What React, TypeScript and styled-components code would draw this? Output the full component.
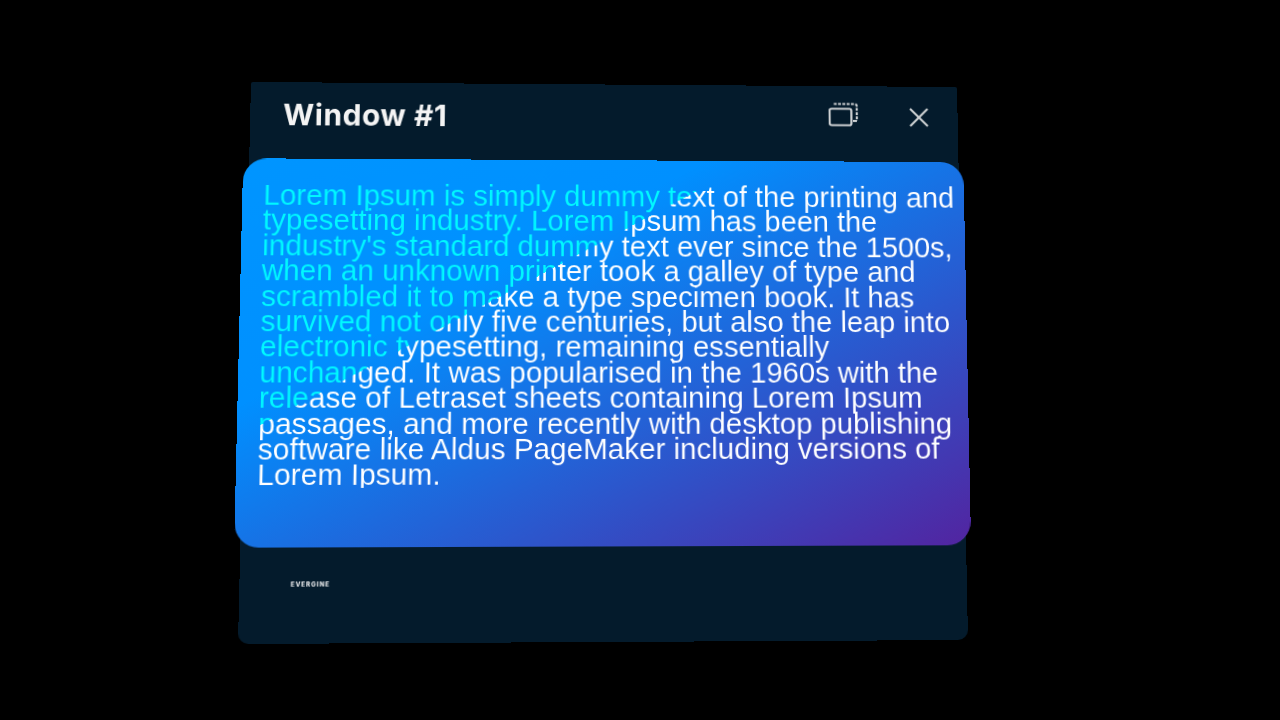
import React from "react";
import styled, { createGlobalStyle } from "styled-components";

const WIDTH = 720;
const HEIGHT = 558;

// Perspective of the floating window: flat corners -> photographed corners (relative to its flow position).
function quadMatrix(q: number[][], w: number, h: number): string {
  const [[x0, y0], [x1, y1], [x2, y2], [x3, y3]] = q;
  const sx = x0 - x1 + x2 - x3;
  const sy = y0 - y1 + y2 - y3;
  const dx1 = x1 - x2;
  const dx2 = x3 - x2;
  const dy1 = y1 - y2;
  const dy2 = y3 - y2;
  const den = dx1 * dy2 - dx2 * dy1;
  const g = (sx * dy2 - dx2 * sy) / den;
  const k = (dx1 * sy - sx * dy1) / den;
  const a = x1 - x0 + g * x1;
  const b = x3 - x0 + k * x3;
  const d = y1 - y0 + g * y1;
  const e = y3 - y0 + k * y3;
  return `matrix3d(${a / w},${d / w},0,${g / w},${b / h},${e / h},0,${k / h},0,0,1,0,${x0},${y0},0,1)`;
}

const windowTransform = quadMatrix(
  [
    [11, 0],
    [717, 5],
    [728, 558],
    [-2, 562],
  ],
  WIDTH,
  HEIGHT,
);

const GlobalStyle = createGlobalStyle`
  html, body {
    margin: 0;
    height: 100%;
    background: #000;
  }
  #root {
    height: 100%;
  }
`;

const Scene = styled.main`
  box-sizing: border-box;
  width: 100%;
  height: 720px;
  padding: 82px 0 0 240px;
  background: #000;
  overflow: hidden;
`;

const Window = styled.section`
  display: flex;
  flex-direction: column;
  width: ${WIDTH}px;
  height: ${HEIGHT}px;
  background: #041b2c;
  border-radius: 2px 2px 10px 10px;
  transform-origin: 0 0;
  transform: ${windowTransform};
`;

const TitleBar = styled.header`
  box-sizing: border-box;
  flex: 0 0 78px;
  display: flex;
  align-items: center;
  padding: 0 30px 20px 33px;
`;

const Title = styled.h1`
  flex: 1;
  margin: 0;
  padding-top: 8px;
  font-family: "Inter", "Noto Sans", sans-serif;
  font-size: 30px;
  font-weight: 700;
  letter-spacing: 0.6px;
  color: #f4f4f4;
`;

const IconButton = styled.button`
  display: flex;
  padding: 0;
  border: 0;
  background: none;
  color: #cfd2d4;
`;

const Controls = styled.div`
  display: flex;
  align-items: flex-end;
  gap: 52px;
`;

const Panel = styled.div`
  box-sizing: border-box;
  flex: 0 0 387px;
  margin: 0 -5px 0 -6px;
  padding: 24px 5px 0 21px;
  border-radius: 24px;
  background: linear-gradient(152deg, #0095ff 0%, #0090ff 32%, #5224a0 100%);
`;

const Body = styled.p`
  margin: 0;
  font-family: "Liberation Sans", Arial, sans-serif;
  font-size: 29.55px;
  line-height: 25.4px;
  color: transparent;
  background: linear-gradient(151.5deg, #00f8ff 0%, #00f8ff 35.5%, #ffffff 35.5%, #ffffff 100%);
  -webkit-background-clip: text;
  background-clip: text;
`;

const Footer = styled.footer`
  flex: 1;
  display: flex;
  align-items: center;
  padding: 0 0 22px 50px;
`;

const Brand = styled.span`
  font-family: "Inter", "Noto Sans", sans-serif;
  font-size: 6.2px;
  font-weight: 800;
  letter-spacing: 0.9px;
  color: #e4e6e8;
`;

const RestoreIcon = () => (
  <svg width="31" height="25" viewBox="0 0 31 25" fill="none" stroke="currentColor" strokeWidth="2.2">
    <rect x="1" y="6.5" width="22.4" height="17" rx="2" />
    <path d="M5.5 1.5H27a2 2 0 0 1 2 2V19" strokeDasharray="3 1.4" />
    <path d="M29 19h-4" />
  </svg>
);

const CloseIcon = () => (
  <svg width="20" height="20" viewBox="0 0 20 20" fill="none" stroke="currentColor" strokeWidth="2.2">
    <path d="M1 1l18 18M19 1L1 19" />
  </svg>
);

const LOREM =
  "Lorem Ipsum is simply dummy text of the printing and typesetting industry. Lorem Ipsum has been the industry's standard dummy text ever since the 1500s, when an unknown printer took a galley of type and scrambled it to make a type specimen book. It has survived not only five centuries, but also the leap into electronic typesetting, remaining essentially unchanged. It was popularised in the 1960s with the release of Letraset sheets containing Lorem Ipsum passages, and more recently with desktop publishing software like Aldus PageMaker including versions of Lorem Ipsum.";

export default function App() {
  return (
    <>
      <GlobalStyle />
      <Scene>
        <Window>
          <TitleBar>
            <Title>Window #1</Title>
            <Controls>
              <IconButton aria-label="Restore">
                <RestoreIcon />
              </IconButton>
              <IconButton aria-label="Close">
                <CloseIcon />
              </IconButton>
            </Controls>
          </TitleBar>
          <Panel>
            <Body>{LOREM}</Body>
          </Panel>
          <Footer>
            <Brand>EVERGINE</Brand>
          </Footer>
        </Window>
      </Scene>
    </>
  );
}
